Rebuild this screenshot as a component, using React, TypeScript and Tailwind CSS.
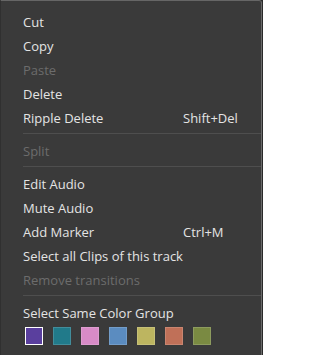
const swatches = [
  "bg-[#5a3f9e]",
  "bg-[#217a8a]",
  "bg-[#d88bc7]",
  "bg-[#5b8cc0]",
  "bg-[#bdb560]",
  "bg-[#c07058]",
  "bg-[#7a8a42]",
];

function Item({
  label,
  shortcut,
  disabled = false,
}: {
  label: string;
  shortcut?: string;
  disabled?: boolean;
}) {
  return (
    <div
      className={[
        "grid h-[24px] grid-cols-[160px_1fr] items-center whitespace-nowrap",
        disabled ? "text-[#6c6c6c]" : "text-[#e4e4e4]",
      ].join(" ")}
    >
      <span>{label}</span>
      {shortcut && <span>{shortcut}</span>}
    </div>
  );
}

function Separator() {
  return <div className="mt-[3px] mb-[5px] h-px bg-[#4e4e4e]" />;
}

export default function App() {
  return (
    <div className="h-[355px] w-[263px] overflow-hidden bg-[#2a2a2a]">
      <div
        className="h-[355px] w-[262px] rounded-tr-[3px] border-t border-r border-l border-t-[#666] border-r-[#6a6a6a] border-l-[#303030] bg-[#3a3a3a] pt-[9px] pl-[22px] text-[13px] leading-[24px]"
        style={{ fontFamily: '"Open Sans", "Noto Sans", sans-serif' }}
      >
        <Item label="Cut" />
        <Item label="Copy" />
        <Item label="Paste" disabled />
        <Item label="Delete" />
        <Item label="Ripple Delete" shortcut="Shift+Del" />
        <Separator />
        <Item label="Split" disabled />
        <Separator />
        <Item label="Edit Audio" />
        <Item label="Mute Audio" />
        <Item label="Add Marker" shortcut="Ctrl+M" />
        <Item label="Select all Clips of this track" />
        <Item label="Remove transitions" disabled />
        <Separator />
        <Item label="Select Same Color Group" />
        <div className="mt-[2px] ml-[2px] flex gap-[10px]">
          {swatches.map((c, i) => (
            <div
              key={c}
              className={[
                "h-[18px] w-[18px] border",
                c,
                i === 0 ? "border-white" : "border-white/15",
              ].join(" ")}
            />
          ))}
        </div>
      </div>
    </div>
  );
}
